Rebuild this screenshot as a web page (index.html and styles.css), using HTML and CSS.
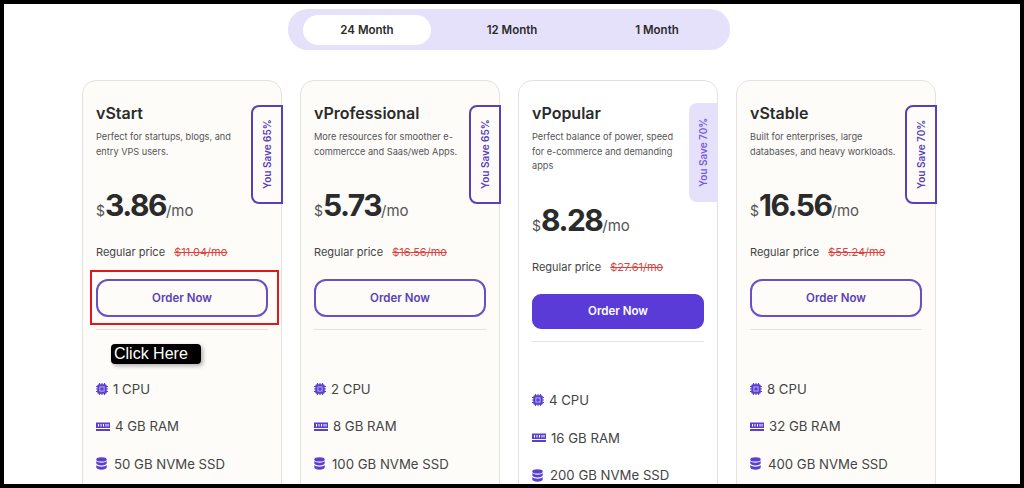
FILE: index.html
```html
<!DOCTYPE html>
<html lang="en">
<head>
    <meta charset="UTF-8">
    <title>VPS Pricing</title>
    <link rel="stylesheet" href="styles.css">
</head>
<body>
    <svg class="defs" width="0" height="0">
        <symbol id="cpu" viewBox="0 0 12 12">
            <path d="M3.5 0v2M6 0v2M8.500 0v2M3.500 10v2M6 10v2M8.500 10v2M0 3.500h2M0 6h2M0 8.500h2M10 3.500h2M10 6h2M10 8.500h2" stroke="#5a3fd0" stroke-width="1.100" fill="none"/>
            <rect x="1.300" y="1.300" width="9.400" height="9.400" rx="1.500" fill="#5a3fd0"/>
            <rect x="3.400" y="3.400" width="5.200" height="5.200" fill="#b9aeea"/>
            <rect x="4.400" y="4.400" width="3.200" height="3.200" fill="#5a3fd0"/>
        </symbol>
        <symbol id="ram" viewBox="0 0 14 9">
            <path d="M0 0.500h14v5.500H0zM0 7h14v2H0z" fill="#5a3fd0"/>
            <path d="M2.500 2v2.500M5 2v2.500M7.500 2v2.500M10 2v2.500M12 2v2.500" stroke="#fff" stroke-width="1"/>
        </symbol>
        <symbol id="disk" viewBox="0 0 11 13">
            <ellipse cx="5.500" cy="2.400" rx="5.200" ry="2.200" fill="#5a3fd0"/>
            <path d="M0.300 4v2.200c0 1.200 2.300 2.200 5.200 2.200s5.200-1 5.200-2.200V4c-1 1.100-3 1.700-5.200 1.700S1.300 5.100 0.300 4z" fill="#5a3fd0"/>
            <path d="M0.300 8v2.500c0 1.200 2.300 2.200 5.200 2.200s5.200-1 5.200-2.200V8c-1 1.100-3 1.700-5.200 1.700S1.300 9.100 0.300 8z" fill="#5a3fd0"/>
        </symbol>
    </svg>

    <div class="frame">
        <div class="tabs">
            <div class="tab active">24 Month</div>
            <div class="tab">12 Month</div>
            <div class="tab">1 Month</div>
        </div>

        <div class="cards">
            <div class="card">
                <div class="badge">You Save 65%</div>
                <h2>vStart</h2>
                <p class="desc">Perfect for startups, blogs, and<br>entry VPS users.</p>
                <div class="price"><span class="cur">$</span><b>3.86</b><span class="per">/mo</span></div>
                <div class="regular">Regular price <s>$11.04/mo</s></div>
                <div class="order-wrap">
                    <a class="order">Order Now</a>
                    <div class="highlight"></div>
                </div>
                <hr>
                <div class="callout">Click Here</div>
                <ul class="specs">
                    <li><svg class="ic-cpu"><use href="#cpu"/></svg>1 CPU</li>
                    <li><svg class="ic-ram"><use href="#ram"/></svg>4 GB RAM</li>
                    <li><svg class="ic-disk"><use href="#disk"/></svg>50 GB NVMe SSD</li>
                </ul>
            </div>

            <div class="card">
                <div class="badge">You Save 65%</div>
                <h2>vProfessional</h2>
                <p class="desc">More resources for smoother e-<br>commercce and Saas/web Apps.</p>
                <div class="price"><span class="cur">$</span><b>5.73</b><span class="per">/mo</span></div>
                <div class="regular">Regular price <s>$16.56/mo</s></div>
                <div class="order-wrap"><a class="order">Order Now</a></div>
                <hr>
                <ul class="specs">
                    <li><svg class="ic-cpu"><use href="#cpu"/></svg>2 CPU</li>
                    <li><svg class="ic-ram"><use href="#ram"/></svg>8 GB RAM</li>
                    <li><svg class="ic-disk"><use href="#disk"/></svg>100 GB NVMe SSD</li>
                </ul>
            </div>

            <div class="card popular">
                <div class="badge">You Save 70%</div>
                <h2>vPopular</h2>
                <p class="desc">Perfect balance of power, speed<br>for e-commerce and demanding<br>apps</p>
                <div class="price"><span class="cur">$</span><b>8.28</b><span class="per">/mo</span></div>
                <div class="regular">Regular price <s>$27.61/mo</s></div>
                <div class="order-wrap"><a class="order">Order Now</a></div>
                <hr>
                <ul class="specs">
                    <li><svg class="ic-cpu"><use href="#cpu"/></svg>4 CPU</li>
                    <li><svg class="ic-ram"><use href="#ram"/></svg>16 GB RAM</li>
                    <li><svg class="ic-disk"><use href="#disk"/></svg>200 GB NVMe SSD</li>
                </ul>
            </div>

            <div class="card">
                <div class="badge">You Save 70%</div>
                <h2>vStable</h2>
                <p class="desc">Built for enterprises, large<br>databases, and heavy workloads.</p>
                <div class="price"><span class="cur">$</span><b>16.56</b><span class="per">/mo</span></div>
                <div class="regular">Regular price <s>$55.24/mo</s></div>
                <div class="order-wrap"><a class="order">Order Now</a></div>
                <hr>
                <ul class="specs">
                    <li><svg class="ic-cpu"><use href="#cpu"/></svg>8 CPU</li>
                    <li><svg class="ic-ram"><use href="#ram"/></svg>32 GB RAM</li>
                    <li><svg class="ic-disk"><use href="#disk"/></svg>400 GB NVMe SSD</li>
                </ul>
            </div>
        </div>
    </div>
</body>
</html>
```

FILE: styles.css
```css
*{
    box-sizing: border-box;
    padding: 0;
    margin: 0;
}
html,body{
    height: 488px;
    overflow: hidden;
}
body{
    background-color: white;
    font-family: "Inter", sans-serif;
    color: #2b2b2b;
}
.defs{
    position: absolute;
}
.frame{
    height: 488px;
    border: 4px solid black;
    overflow: hidden;
    background-color: white;
    padding-top: 5px;
}
.tabs{
    display: flex;
    align-items: center;
    gap: 17px;
    width: 442px;
    height: 41px;
    margin-left: 284px;
    padding: 0 15px;
    background-color: #e6e1fb;
    border-radius: 20px;
}
.tab{
    flex: none;
    width: 128px;
    height: 30px;
    line-height: 30px;
    text-align: center;
    font-size: 11.5px;
    font-weight: 600;
    border-radius: 15px;
}
.tab.active{
    background-color: white;
}
.cards{
    display: flex;
    gap: 18px;
    margin-top: 30px;
    margin-left: 78px;
}
.card{
    position: relative;
    width: 200px;
    height: 440px;
    padding: 23px 13px 0;
    background-color: #fdfcf9;
    border: 1px solid #e4e2df;
    border-radius: 14px;
}
.card.popular{
    background-color: white;
}
.badge{
    position: absolute;
    top: 24px;
    right: -2px;
    width: 32px;
    height: 99px;
    border: 2px solid #5a3fb8;
    border-radius: 0 8px 8px 0;
    writing-mode: vertical-rl;
    rotate: 180deg;
    text-align: center;
    line-height: 28px;
    font-size: 10px;
    font-weight: 600;
    color: #5a3fb8;
}
.popular .badge{
    top: 22px;
    right: -1px;
    width: 29px;
    border: none;
    background-color: #e6e1fb;
    color: #7a5be0;
    line-height: 29px;
}
h2{
    font-size: 16px;
    font-weight: 600;
    line-height: 18px;
}
.desc{
    margin-top: 8px;
    font-size: 9.2px;
    line-height: 14.5px;
    color: #555;
    min-height: 29px;
}
.price{
    margin-top: 26px;
    height: 40px;
    line-height: 40px;
    white-space: nowrap;
    color: #555;
}
.price b{
    font-size: 30px;
    font-weight: 700;
    letter-spacing: -1.5px;
    color: #2b2b2b;
}
.cur{
    font-size: 14px;
}
.per{
    font-size: 15px;
}
.regular{
    margin-top: 20px;
    font-size: 11px;
    line-height: 15px;
    color: #444;
}
.regular s{
    margin-left: 6px;
    color: #d9443f;
}
.order-wrap{
    position: relative;
    margin-top: 19px;
}
.order{
    display: block;
    height: 38px;
    line-height: 34px;
    text-align: center;
    font-size: 11.5px;
    font-weight: 600;
    color: #5a3fb8;
    border: 2px solid #6a50c4;
    border-radius: 12px;
}
.popular .order{
    height: 35px;
    line-height: 31px;
    color: white;
    background-color: #5a3bd8;
    border-color: #5a3bd8;
    border-radius: 9px;
}
.highlight{
    position: absolute;
    top: -9px;
    left: -6px;
    right: -11px;
    height: 55px;
    border: 2px solid #e0161c;
}
hr{
    margin-top: 12px;
    border: none;
    border-top: 1px solid #e4e2df;
}
.callout{
    position: absolute;
    top: 263px;
    left: 28px;
    width: 90px;
    height: 20px;
    padding-left: 3px;
    background-color: black;
    color: white;
    font-family: "Liberation Sans", sans-serif;
    font-size: 16px;
    line-height: 20px;
    border-radius: 4px;
    box-shadow: 2px 2px 4px rgba(0,0,0,0.3);
}
.specs{
    list-style: none;
    margin-top: 40px;
}
.specs li{
    display: flex;
    align-items: center;
    gap: 5px;
    height: 37.5px;
    font-size: 13.2px;
    color: #444;
}
.ic-cpu{
    width: 12px;
    height: 12px;
}
.ic-ram{
    width: 14px;
    height: 9px;
}
.ic-disk{
    width: 11px;
    height: 13px;
    margin-right: 2px;
}
```
